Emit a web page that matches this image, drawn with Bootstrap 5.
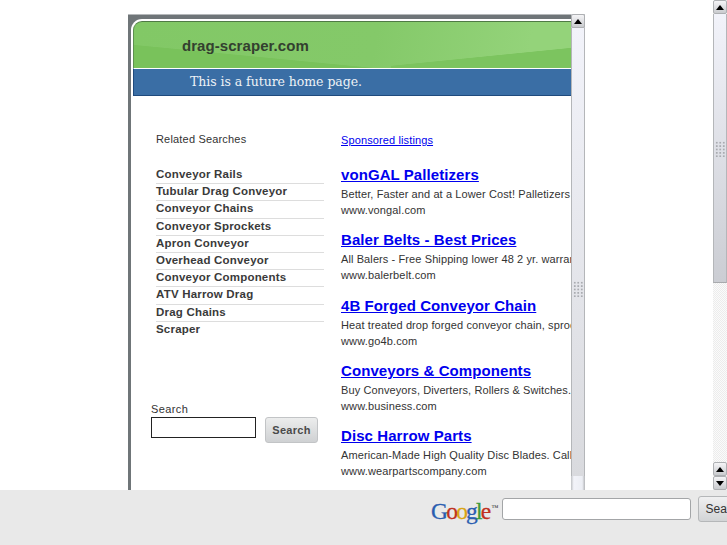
<!DOCTYPE html>
<html lang="en"><head><meta charset="utf-8"><title>drag-scraper.com</title>
<link href="https://cdn.jsdelivr.net/npm/bootstrap@5.3.0/dist/css/bootstrap.min.css" rel="stylesheet">
<style>
html,body{height:100%;margin:0;overflow:hidden;background:#fff}
body{font-family:"Liberation Sans",Arial,sans-serif;color:#333}
.pagewrap{width:727px;height:545px}
.viewport{height:490px}
.canvasarea{width:713px;height:490px;padding:14px 0 0 128px;overflow:hidden}
.framebox{width:457px;height:476px;flex:none}
.framepane{width:443px;height:476px;background:#6f7578;border-top:1px solid #b5b8ba;overflow:hidden;padding:0 0 0 3px;flex:none}
.pageinner{background:#fff;width:440px;height:475px;margin-top:4px;border-radius:11px 0 0 0;overflow:hidden;padding:2px 0 0 2px}
.greenband{height:47px;width:438px;border-radius:9px 0 0 0;border-top:1px solid #4f7a45;border-left:1px solid #5d8f50;
 background:linear-gradient(174.3deg,transparent 68%,#7cc45f 69%) right top/180px 100% no-repeat,linear-gradient(185.5deg,transparent 68%,#79c25b 69%) left top/284px 100% no-repeat,linear-gradient(100deg,#82c866,#84c969 55%,#94d37a 90%);
 padding:15px 0 0 48px;font-weight:700;font-size:15px;line-height:18px;color:#33402f;letter-spacing:.06px}
.blueband{height:28px;width:438px;border-top:1px solid #fff;border-bottom:1px solid #1f4a7d;border-left:1px solid #1f4a7d;background:#3a6ea5;color:#eef2f6;font-family:"DejaVu Serif",serif;font-size:12.5px;line-height:26px;padding-left:56px;white-space:nowrap;letter-spacing:-.05px}
.contentcols{width:438px;padding:35px 0 0 1px}
.leftcol{width:207px;flex:none;padding-left:22px;font-size:11px}
.rightcol{flex:none;white-space:nowrap;width:230px}
.reltitle{line-height:16px;letter-spacing:.18px;color:#333;margin-bottom:20px}
.rellink{width:168px;height:17.2px;line-height:15px;border-bottom:1px solid #ddd;font-weight:700;font-size:11.5px;color:#3a3a3a;letter-spacing:.2px}
.rellink:last-child{border-bottom:0}
.searchblock{margin:63px 0 0 -5px}
.searchlabel{font-size:11px;line-height:15px;letter-spacing:.4px;color:#333}
.plaininput{width:105px;height:21px;border:1px solid #222;background:#fff;display:block}
.searchbtn{width:53px;height:26px;margin-left:9px;border:1px solid #c2c4c6;border-radius:3px;background:linear-gradient(#eceded,#cfd1d3);font-weight:700;font-size:11px;color:#4a4a4a;padding:0;letter-spacing:.3px}
.sponsored{font-size:11px;line-height:16px;color:#00e;text-decoration:underline;margin-top:1px;letter-spacing:.12px;display:block;margin-bottom:16px}
.adblock{height:65.3px;font-size:11px;line-height:16px;color:#333;letter-spacing:.1px}
.adtitle{display:block;font-size:15px;font-weight:700;color:#00e;text-decoration:underline;line-height:21px;letter-spacing:.08px}
.addesc{display:block;margin-top:1px}
.addesc+.addesc{margin-top:0;letter-spacing:.15px}
.sbar{width:14px;background:linear-gradient(90deg,#c0c2c5,#f2f3f9 20%,#eceef4 80%,#b4b6b9);flex:none;height:100%}
.sbtn{height:14px;width:14px;background:linear-gradient(#f5f5f7,#c9cbce);border:1px solid #aeb0b3;border-radius:2px;flex:none;color:#000}
.tri{width:0;height:0;border-left:4px solid transparent;border-right:4px solid transparent}
.triup{border-bottom:5px solid #000}
.tridown{border-top:5px solid #000}
.sthumb{flex:none;border-left:1px solid #b4b6b9;border-right:1px solid #b4b6b9}
.grip{width:10px;height:16px;background-image:radial-gradient(circle,#a9abb0 1px,transparent 1.3px);background-size:3.5px 3.4px}
.innerthumb{height:448px;padding-top:253px;background:linear-gradient(#f2f3fa,#d9dade)}
.outerthumb{height:269px;padding-top:127px;background:linear-gradient(#f2f3fa,#cbcdd3);border-bottom:1px solid #a8aaad}
.dottrack{background:repeating-conic-gradient(#ececec 0 25%,#fbfbfb 0 50%) 0 0/2px 2px}
.bottombar{height:55px;background:#e9e9e9;overflow:hidden;padding:6px 0 0 431px;white-space:nowrap}
.glogo{font-family:"Liberation Serif",serif;font-size:23.5px;line-height:30px;width:71px;flex:none;letter-spacing:-1.8px;font-weight:400;-webkit-text-stroke:.3px}
.glogo sup{font-size:7px;top:-9px;color:#222;letter-spacing:0;margin-left:2px;-webkit-text-stroke:0}
.bottominput{width:189px;height:22px;border:1px solid #a3a5a7;border-radius:3px;background:#fff;flex:none;margin-top:2px}
.bottombtn{width:53px;height:26px;margin-left:7px;border:1px solid #b5b7b9;border-radius:3px;background:linear-gradient(#f0f0f1,#d2d4d6);font-size:12px;color:#333;padding:0;flex:none}
.gb{color:#2a5db0}.gr{color:#c0311f}.gy{color:#d9a514}.gg{color:#3b9a3b}
</style></head>
<body>
<div class="pagewrap d-flex flex-column">
  <div class="viewport d-flex">
    <div class="canvasarea">
      <div class="framebox d-flex">
        <div class="framepane">
          <div class="pageinner">
            <div class="greenband">drag-scraper.com</div>
            <div class="blueband">This is a future home page.</div>
            <div class="contentcols d-flex">
              <div class="leftcol">
                <div class="reltitle">Related Searches</div>
                <div>
                <div class="rellink">Conveyor Rails</div>
                <div class="rellink">Tubular Drag Conveyor</div>
                <div class="rellink">Conveyor Chains</div>
                <div class="rellink">Conveyor Sprockets</div>
                <div class="rellink">Apron Conveyor</div>
                <div class="rellink">Overhead Conveyor</div>
                <div class="rellink">Conveyor Components</div>
                <div class="rellink">ATV Harrow Drag</div>
                <div class="rellink">Drag Chains</div>
                <div class="rellink">Scraper</div>
                </div>
                <div class="searchblock">
                  <div class="searchlabel">Search</div>
                  <div class="d-flex align-items-start">
                    <span class="plaininput"></span>
                    <button type="button" class="searchbtn">Search</button>
                  </div>
                </div>
              </div>
              <div class="rightcol">
                <a class="sponsored" href="#">Sponsored listings</a>
                <div class="adblock"><a class="adtitle" href="#">vonGAL Palletizers</a><span class="addesc">Better, Faster and at a Lower Cost! Palletizers By vonGAL</span><span class="addesc">www.vongal.com</span></div>
                <div class="adblock"><a class="adtitle" href="#">Baler Belts - Best Prices</a><span class="addesc">All Balers - Free Shipping lower 48 2 yr. warranty on belts</span><span class="addesc">www.balerbelt.com</span></div>
                <div class="adblock"><a class="adtitle" href="#">4B Forged Conveyor Chain</a><span class="addesc">Heat treated drop forged conveyor chain, sprockets and more</span><span class="addesc">www.go4b.com</span></div>
                <div class="adblock"><a class="adtitle" href="#">Conveyors &amp; Components</a><span class="addesc">Buy Conveyors, Diverters, Rollers &amp; Switches. Shop today</span><span class="addesc">www.business.com</span></div>
                <div class="adblock"><a class="adtitle" href="#">Disc Harrow Parts</a><span class="addesc">American-Made High Quality Disc Blades. Call Today for more</span><span class="addesc">www.wearpartscompany.com</span></div>
              </div>
            </div>
          </div>
        </div>
        <div class="sbar d-flex flex-column">
          <div class="sbtn d-flex align-items-center justify-content-center"><span class="tri triup"></span></div>
          <div class="sthumb innerthumb d-flex justify-content-center"><span class="grip"></span></div>
        </div>
      </div>
    </div>
    <div class="sbar dottrack d-flex flex-column">
      <div class="sbtn d-flex align-items-center justify-content-center"><span class="tri triup"></span></div>
      <div class="sthumb outerthumb d-flex justify-content-center"><span class="grip"></span></div>
      <div class="flex-grow-1"></div>
      <div class="sbtn d-flex align-items-center justify-content-center"><span class="tri triup"></span></div>
      <div class="sbtn d-flex align-items-center justify-content-center"><span class="tri tridown"></span></div>
    </div>
  </div>
  <div class="bottombar d-flex align-items-start">
    <div class="glogo"><span class="gb">G</span><span class="gr">o</span><span class="gy">o</span><span class="gb">g</span><span class="gg">l</span><span class="gr">e</span><sup>™</sup></div>
    <div class="bottominput"></div>
    <button type="button" class="bottombtn">Search</button>
  </div>
</div>
</body></html>
